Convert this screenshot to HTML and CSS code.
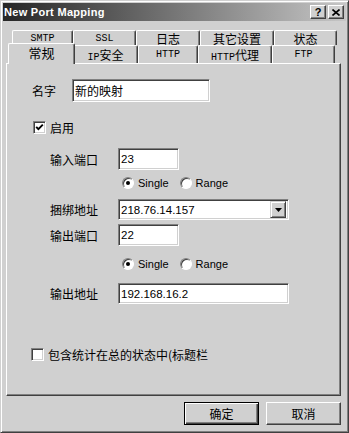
FILE: index.html
```html
<!DOCTYPE html>
<html>
<head>
<meta charset="utf-8">
<link rel="stylesheet" href="styles.css">
</head>
<body>
<div class="win">
  <div class="title">
    <span class="ttext">New Port Mapping</span>
    <div class="tbtns">
      <span class="tbtn q">?</span>
      <span class="tbtn"><svg width="8" height="7" viewBox="0 0 8 7"><path d="M0.5 0.5 L7.5 6.5 M7.5 0.5 L0.5 6.5" stroke="#000" stroke-width="1.6"/></svg></span>
    </div>
  </div>
  <div class="tabs">
    <div class="trow back">
      <div class="tab w-smtp"><span class="lat">SMTP</span></div>
      <div class="tab w-ssl"><span class="lat">SSL</span></div>
      <div class="tab w-log">日志</div>
      <div class="tab w-other">其它设置</div>
      <div class="tab w-state">状态</div>
    </div>
    <div class="trow front">
      <div class="tab sel w-gen">常规</div>
      <div class="tab w-ip"><span class="lat">IP</span>安全</div>
      <div class="tab w-http"><span class="lat">HTTP</span></div>
      <div class="tab w-proxy"><span class="lat">HTTP</span>代理</div>
      <div class="tab w-ftp"><span class="lat">FTP</span></div>
    </div>
  </div>
  <div class="panel">
    <div class="r-name">
      <span class="lbl-name">名字</span>
      <div class="field name-in">新的映射</div>
    </div>
    <div class="r-check">
      <span class="cbox"><svg width="9" height="9" viewBox="0 0 9 9"><path d="M1.2 3.8 L3.4 6.2 L7.8 1.6" fill="none" stroke="#000" stroke-width="1.9"/></svg></span>
      <span>启用</span>
    </div>
    <div class="r-field r-inport">
      <span class="lbl">输入端口</span>
      <div class="field port num">23</div>
    </div>
    <div class="r-radio r-radio1">
      <span class="radio on"></span><span class="rtext">Single</span>
      <span class="radio"></span><span class="rtext">Range</span>
    </div>
    <div class="r-field r-bind">
      <span class="lbl">捆绑地址</span>
      <div class="field combo num"><span class="ctext">218.76.14.157</span><span class="dd"><svg width="7" height="4" viewBox="0 0 7 4"><path d="M0 0 H7 L3.5 4 Z" fill="#000"/></svg></span></div>
    </div>
    <div class="r-field r-outport">
      <span class="lbl">输出端口</span>
      <div class="field port num">22</div>
    </div>
    <div class="r-radio r-radio2">
      <span class="radio on"></span><span class="rtext">Single</span>
      <span class="radio"></span><span class="rtext">Range</span>
    </div>
    <div class="r-field r-outaddr">
      <span class="lbl">输出地址</span>
      <div class="field addr num">192.168.16.2</div>
    </div>
    <div class="r-check r-stat">
      <span class="cbox"></span>
      <span class="stat-text">包含统计在总的状态中(标题栏</span>
    </div>
  </div>
  <div class="buttons">
    <div class="btn def"><span class="bin">确定</span></div>
    <div class="btn"><span class="bin">取消</span></div>
  </div>
</div>
</body>
</html>
```

FILE: styles.css
```css
html, body {
  margin: 0;
  padding: 0;
  background: #d0d0d0;
}
body {
  font-family: "Noto Sans CJK SC", "Liberation Sans", sans-serif;
  font-size: 12px;
  color: #000;
}
.win {
  width: 349px;
  height: 433px;
  box-sizing: border-box;
  background: #d0d0d0;
  border: 1px solid;
  border-color: #d0d0d0 #404040 #404040 #d0d0d0;
  box-shadow: inset 1px 1px #fff, inset -1px -1px #808080;
  padding: 2px;
  display: flex;
  flex-direction: column;
  overflow: hidden;
}
.title {
  height: 18px;
  flex: none;
  display: flex;
  align-items: center;
  justify-content: space-between;
  background: linear-gradient(to right, #262626, #c6c6c6);
  padding: 0 2px 0 1px;
}
.ttext {
  font-family: "Liberation Sans", sans-serif;
  font-weight: bold;
  font-size: 11px;
  color: #fff;
  letter-spacing: 0.3px;
  line-height: 18px;
}
.tbtns {
  display: flex;
  gap: 2px;
}
.tbtn {
  width: 16px;
  height: 14px;
  box-sizing: border-box;
  background: #d0d0d0;
  border: 1px solid;
  border-color: #fff #404040 #404040 #fff;
  box-shadow: inset -1px -1px #808080;
  display: flex;
  align-items: center;
  justify-content: center;
}
.tbtn.q {
  font-family: "Liberation Sans", sans-serif;
  font-weight: bold;
  font-size: 11px;
  line-height: 12px;
}

/* tabs */
.tabs {
  margin-top: 9px;
  flex: none;
  display: flex;
  flex-direction: column;
}
.trow {
  display: flex;
}
.trow.back {
  height: 15px;
  margin-left: 9px;
}
.trow.front {
  height: 18px;
  margin-left: 7px;
}
.tab {
  box-sizing: border-box;
  border-left: 1px solid #fff;
  border-top: 1px solid #fff;
  border-right: 1px solid #404040;
  box-shadow: inset -1px 0 #808080;
  border-top-left-radius: 2px;
  border-top-right-radius: 2px;
  display: flex;
  justify-content: center;
  align-items: baseline;
  font-size: 12px;
  line-height: 14px;
}
.back .tab {
  padding-top: 1px;
  line-height: 13px;
}
.front .tab {
  padding-top: 2px;
  background: #d0d0d0;
}
.lat {
  font-family: "Liberation Mono", monospace;
  font-size: 10px;
}
.w-smtp { width: 61px; }
.w-ssl { width: 63px; }
.w-log { width: 64px; }
.w-other { width: 74px; }
.w-state { width: 63px; }
.w-gen { width: 65px; }
.w-ip { width: 65px; }
.w-http { width: 60px; }
.w-proxy { width: 74px; }
.w-ftp { width: 63px; }
.tab.sel {
  position: relative;
  z-index: 3;
  margin: -2px -2px -1px -2px;
  width: 67px;
  height: 21px;
  background: #d0d0d0;
  padding-top: 2px;
  font-size: 13px;
}

/* panel */
.panel {
  position: relative;
  z-index: 1;
  margin-left: 3px;
  width: 335px;
  height: 333px;
  flex: none;
  box-sizing: border-box;
  border: 1px solid;
  border-color: #fff #404040 #404040 #fff;
  box-shadow: inset -1px -1px #808080;
  display: flex;
  flex-direction: column;
}
.field {
  box-sizing: border-box;
  background: #fff;
  border: 1px solid;
  border-color: #808080 #fff #fff #808080;
  box-shadow: inset 1px 1px #404040, inset -1px -1px #d0d0d0;
  padding-left: 2px;
  display: flex;
  align-items: center;
  white-space: nowrap;
}
.num {
  font-family: "Liberation Sans", sans-serif;
  font-size: 11.5px;
}
.r-name {
  margin: 15px 0 0 25px;
  display: flex;
  align-items: center;
}
.lbl-name {
  width: 40px;
}
.name-in {
  width: 138px;
  height: 23px;
}
.r-check {
  margin: 19px 0 0 26px;
  height: 13px;
  display: flex;
  align-items: center;
  gap: 4px;
}
.cbox {
  width: 13px;
  height: 13px;
  flex: none;
  box-sizing: border-box;
  background: #fff;
  border: 1px solid;
  border-color: #808080 #fff #fff #808080;
  box-shadow: inset 1px 1px #404040, inset -1px -1px #d0d0d0;
  display: flex;
  align-items: center;
  justify-content: center;
}
.r-field {
  margin-left: 43px;
  display: flex;
  align-items: center;
}
.lbl {
  width: 68px;
  flex: none;
}
.port {
  width: 61px;
  height: 22px;
}
.r-inport { margin-top: 14px; }
.r-radio {
  margin-left: 115px;
  height: 12px;
  display: flex;
  align-items: center;
  font-family: "Liberation Sans", sans-serif;
  font-size: 11px;
}
.r-radio1 { margin-top: 7px; }
.r-radio2 { margin-top: 12px; }
.radio {
  width: 12px;
  height: 12px;
  flex: none;
  box-sizing: border-box;
  border-radius: 50%;
  background: #fff;
  border: 1px solid;
  border-color: #808080 #fff #fff #808080;
  box-shadow: inset 1px 1px #404040;
  display: flex;
  align-items: center;
  justify-content: center;
}
.radio.on::after {
  content: "";
  width: 4px;
  height: 4px;
  border-radius: 50%;
  background: #000;
}
.rtext {
  margin: 0 11px 0 4px;
}
.r-bind { margin-top: 10px; }
.combo {
  width: 171px;
  height: 21px;
  justify-content: space-between;
  padding-right: 2px;
}
.dd {
  width: 16px;
  height: 17px;
  box-sizing: border-box;
  background: #d0d0d0;
  border: 1px solid;
  border-color: #d0d0d0 #404040 #404040 #d0d0d0;
  box-shadow: inset 1px 1px #fff, inset -1px -1px #808080;
  display: flex;
  align-items: center;
  justify-content: center;
}
.r-outport { margin-top: 4px; }
.r-outaddr { margin-top: 13px; }
.addr {
  width: 171px;
  height: 21px;
}
.r-stat {
  margin: 44px 0 0 24px;
}
.stat-text {
  white-space: nowrap;
}

/* buttons */
.buttons {
  margin-top: 6px;
  display: flex;
  justify-content: flex-end;
  gap: 7px;
  padding-right: 5px;
}
.btn {
  width: 75px;
  height: 23px;
  box-sizing: border-box;
  background: #d0d0d0;
  border: 1px solid;
  border-color: #fff #404040 #404040 #fff;
  box-shadow: inset -1px -1px #808080;
  display: flex;
  align-items: center;
  justify-content: center;
}
.btn.def {
  border: 1px solid #000;
  box-shadow: inset 1px 1px #fff, inset -1px -1px #404040, inset -2px -2px #808080;
}
.bin {
  line-height: 14px;
}
```
